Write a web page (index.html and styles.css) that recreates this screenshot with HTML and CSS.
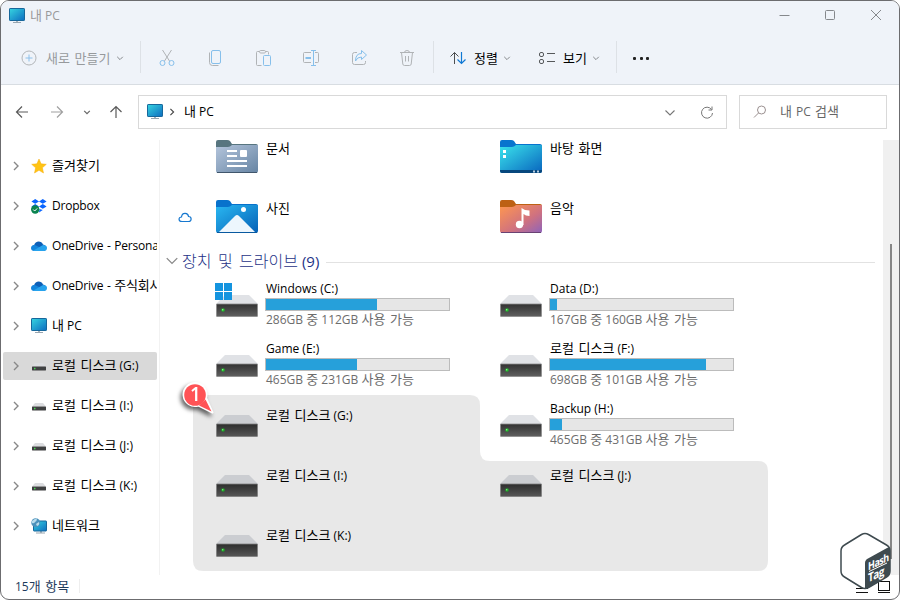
FILE: index.html
```html
<!DOCTYPE html>
<html lang="ko">
<head>
  <meta charset="UTF-8">
  <meta name="viewport" content="width=device-width, initial-scale=1.0">
  <title>내 PC</title>
  <link rel="stylesheet" href="styles.css">
</head>
<body>
  <!-- shared icons -->
  <svg class="defs" width="0" height="0">
    <defs>
      <linearGradient id="g-pc" x1="0" y1="0" x2="1" y2="1">
        <stop offset="0" stop-color="#36d5e0"/><stop offset="1" stop-color="#0d6cc0"/>
      </linearGradient>
      <linearGradient id="g-disk" x1="0" y1="0" x2="0" y2="1">
        <stop offset="0" stop-color="#323232"/><stop offset="1" stop-color="#606060"/>
      </linearGradient>
      <linearGradient id="g-doc" x1="0" y1="0" x2="1" y2="1">
        <stop offset="0" stop-color="#b4c5dc"/><stop offset="1" stop-color="#6684a3"/>
      </linearGradient>
      <linearGradient id="g-pic" x1="0" y1="0" x2="1" y2="1">
        <stop offset="0" stop-color="#2ab8f2"/><stop offset="1" stop-color="#0560b6"/>
      </linearGradient>
      <linearGradient id="g-desk" x1="0" y1="0" x2="1" y2="1">
        <stop offset="0" stop-color="#3be4ec"/><stop offset="1" stop-color="#0864be"/>
      </linearGradient>
      <linearGradient id="g-music" x1="0" y1="0" x2="1" y2="1">
        <stop offset="0" stop-color="#ff974f"/><stop offset=".6" stop-color="#cf7180"/><stop offset="1" stop-color="#8d63bb"/>
      </linearGradient>
    </defs>
    <symbol id="pc" viewBox="0 0 16 16">
      <path d="M7 12h2v3H7z" fill="#a9b4bd"/>
      <path d="M4 14h8v1H4z" fill="#98a5b0"/>
      <rect x=".5" y=".5" width="15" height="12" rx=".6" fill="url(#g-pc)" stroke="#17679b"/>
    </symbol>
    <symbol id="cloud" viewBox="0 0 16 12">
      <path d="M3 10C0 10 0 6 3 5.500C4 1 10 0 12 4.500C16 5 16.500 10 13 11H3z" fill="#0c5fb7"/>
      <path d="M0 8C0 5.500 2 5 4 5l8 4 1 2H3C1.300 11 0 9.800 0 8z" fill="#1285dc"/>
      <path d="M2 10.800L12 5c3 0 4 1.400 4 3 0 1.800-1.200 3-3 3H3z" fill="#27a3ed"/>
    </symbol>
    <symbol id="disk-small" viewBox="0 0 14 8">
      <path d="M3 0h8l3 3.500H0z" fill="#dcdde0"/>
      <rect y="3.500" width="14" height="4" rx=".4" fill="#404142"/>
      <rect x="2" y="4.800" width="1.500" height="1.500" fill="#49d451"/>
    </symbol>
    <symbol id="disk" viewBox="0 0 42 22">
      <path d="M9 0h24l9 9H0z" fill="#e0e2e6"/>
      <rect x=".5" y="9" width="41" height="12.500" rx=".5" fill="url(#g-disk)" stroke="#8b8b8b" stroke-width=".8"/>
      <circle cx="7" cy="15" r="1.800" fill="#20b72b"/>
      <circle cx="6.700" cy="14.700" r=".7" fill="#9dfa9b"/>
    </symbol>
    <symbol id="chev" viewBox="0 0 8 8">
      <path d="M1.200 2.800L4 5.600l2.800-2.800" fill="none" stroke="currentColor"/>
    </symbol>
    <symbol id="chev-wide" viewBox="0 0 12 12">
      <path d="M1.500 3.500L6 8l4.500-4.500" fill="none" stroke="currentColor" stroke-width="1.100"/>
    </symbol>
    <symbol id="right" viewBox="0 0 8 10">
      <path d="M2 1l4 4-4 4" fill="none" stroke="currentColor" stroke-width="1.400"/>
    </symbol>
  </svg>

  <div class="window">
    <header class="top">
      <div class="titlebar">
        <svg class="pc-icon"><use href="#pc"/></svg>
        <span class="title"><span class="ko">내</span> PC</span>
        <div class="win-buttons">
          <svg viewBox="0 0 12 12"><path d="M1.500 5.500h10"/></svg>
          <svg viewBox="0 0 12 12"><rect x="1.500" y=".5" width="9" height="9" rx="1"/></svg>
          <svg viewBox="0 0 12 12"><path d="M1 0l10 10M11 0L1 10"/></svg>
        </div>
      </div>
      <div class="toolbar">
        <div class="tool new">
          <svg class="plus" viewBox="0 0 16 16"><circle cx="8" cy="8" r="7" stroke="#b2b5b8"/><path d="M8 4.500v7M4.500 8h7" stroke="#8dc0ea"/></svg>
          <span class="ko">새로 만들기</span>
          <svg class="chev"><use href="#chev"/></svg>
        </div>
        <div class="icons">
          <svg viewBox="0 0 18 18"><path d="M4.500 1l7 11M13.500 1l-7 11" stroke="#b0b3b6"/><circle cx="4.500" cy="14" r="2.500" stroke="#86bfeb"/><circle cx="13.500" cy="14" r="2.500" stroke="#86bfeb"/></svg>
          <svg viewBox="0 0 18 18"><path d="M3.500 3.500v10q0 3 3 3h6" stroke="#b0b3b6"/><rect x="5.500" y="1.500" width="9" height="13" rx="1.500" stroke="#86bfeb"/></svg>
          <svg viewBox="0 0 18 18"><path d="M7.500 16.500h-4q-1 0-1-1v-12q0-1 1-1h2M11.500 2.500h2q1 0 1 1v2" stroke="#b0b3b6"/><rect x="5.500" y="1.500" width="6" height="2.500" rx="1.200" stroke="#b0b3b6"/><rect x="9.500" y="6.500" width="7" height="10" rx="1" stroke="#86bfeb"/></svg>
          <svg viewBox="0 0 18 18"><path d="M9 3.500H2.500q-1 0-1 1v8q0 1 1 1H9M13 3.500h2.500q1 0 1 1v8q0 1-1 1H13" stroke="#b0b3b6"/><path d="M11.500 1.500v15M9 1.500h5M9 16.500h5" stroke="#86bfeb"/><path d="M3.500 9H9" stroke="#86bfeb" stroke-width="2"/></svg>
          <svg viewBox="0 0 18 18"><path d="M7 3.500H4.500q-2 0-2 2v8q0 2 2 2h9q2 0 2-2V12" stroke="#b0b3b6"/><path d="M11.500 1.500L16.500 6l-5 4.500V8Q7 8 5.500 12 5.500 4.500 11.500 4.500z" stroke="#86bfeb"/></svg>
          <svg viewBox="0 0 18 18"><path d="M2 3.500h14M6.500 3.500q0-2 2.500-2t2.500 2M3.500 3.500l1.300 11.500q.2 1.500 1.700 1.500h5q1.500 0 1.700-1.500L14.500 3.500M7.500 7v5.500M10.500 7v5.500" stroke="#b0b3b6"/></svg>
        </div>
        <div class="tool sort">
          <svg class="sort-icon" viewBox="0 0 18 14"><path d="M5.500 13V1.500M1.500 5.500l4-4 4 4" stroke="#4c4e50"/><path d="M12.500 1v11.500M8.500 8.500l4 4 4-4" stroke="#0f78d4" stroke-width="1.200"/></svg>
          <span class="ko">정렬</span>
          <svg class="chev"><use href="#chev"/></svg>
        </div>
        <div class="tool view">
          <svg class="view-icon" viewBox="0 0 18 14"><g stroke="#55585a"><rect x="1.500" y="1.500" width="4" height="4" rx="1.500"/><rect x="1.500" y="8.500" width="4" height="4" rx="1.500"/><path d="M9 2.500h8M9 10.500h8"/></g></svg>
          <span class="ko">보기</span>
          <svg class="chev"><use href="#chev"/></svg>
        </div>
        <div class="more"><i></i><i></i><i></i></div>
      </div>
    </header>

    <nav class="address-row">
      <div class="arrows">
        <svg viewBox="0 0 14 14"><path d="M13 7H1.500M7 1.500L1.500 7 7 12.500"/></svg>
        <svg class="light" viewBox="0 0 14 14"><path d="M1 7h11.500M7 1.500L12.500 7 7 12.500"/></svg>
        <svg class="recent"><use href="#chev"/></svg>
        <svg viewBox="0 0 14 14"><path d="M7 13V1.500M1.500 7L7 1.500 12.500 7"/></svg>
      </div>
      <div class="address">
        <svg class="pc-icon"><use href="#pc"/></svg>
        <svg class="crumb"><use href="#right"/></svg>
        <span><span class="ko">내</span> PC</span>
        <svg class="drop"><use href="#chev-wide"/></svg>
        <svg class="refresh" viewBox="0 0 14 14"><path d="M11.500 3.500a5.500 5.500 0 1 0 1 3.500M12 .5v3.500H8.500"/></svg>
      </div>
      <div class="search">
        <svg viewBox="0 0 14 14"><circle cx="8.500" cy="5" r="4"/><path d="M5.500 8L1 12.500"/></svg>
        <span><span class="ko">내</span> PC <span class="ko">검색</span></span>
      </div>
    </nav>

    <div class="body">
      <aside class="sidebar">
        <div class="nav-item">
          <svg class="arrow"><use href="#right"/></svg>
          <svg class="nav-icon" viewBox="0 0 16 16"><path d="M8 1l2.100 4.800 5.200.5-3.900 3.500 1.100 5.200L8 12.300 3.500 15l1.100-5.200L.7 6.300l5.200-.5z" fill="#ffc414" stroke="#f6ac12" stroke-width=".5"/></svg>
          <span><span class="ko">즐겨찾기</span></span>
        </div>
        <div class="nav-item">
          <svg class="arrow"><use href="#right"/></svg>
          <svg class="nav-icon" viewBox="0 0 16 16"><path d="M4.200 1L8 3.400 4.200 5.800.4 3.400zM11.800 1l3.800 2.400-3.800 2.400L8 3.400zM4.200 6L8 8.400l-3.800 2.400L.4 8.400zM11.800 6l3.800 2.400-3.800 2.400L8 8.400zM8.500 11l3.300 1L8 14.500z" fill="#0a65ff"/><circle cx="4.200" cy="11.500" r="4.200" fill="#0b8450"/><path d="M2.200 11.500l1.500 1.500 2.500-2.600" fill="none" stroke="#fff"/></svg>
          <span class="tight">Dropbox</span>
        </div>
        <div class="nav-item">
          <svg class="arrow"><use href="#right"/></svg>
          <svg class="nav-icon"><use href="#cloud"/></svg>
          <span class="tight">OneDrive - Persona</span>
        </div>
        <div class="nav-item">
          <svg class="arrow"><use href="#right"/></svg>
          <svg class="nav-icon"><use href="#cloud"/></svg>
          <span class="tight">OneDrive - <span class="ko">주식회사</span></span>
        </div>
        <div class="nav-item">
          <svg class="arrow"><use href="#right"/></svg>
          <svg class="nav-icon"><use href="#pc"/></svg>
          <span><span class="ko">내</span> PC</span>
        </div>
        <div class="nav-item active">
          <svg class="arrow"><use href="#right"/></svg>
          <svg class="nav-icon disk-small"><use href="#disk-small"/></svg>
          <span><span class="ko">로컬 디스크</span> (G:)</span>
        </div>
        <div class="nav-item">
          <svg class="arrow"><use href="#right"/></svg>
          <svg class="nav-icon disk-small"><use href="#disk-small"/></svg>
          <span><span class="ko">로컬 디스크</span> (I:)</span>
        </div>
        <div class="nav-item">
          <svg class="arrow"><use href="#right"/></svg>
          <svg class="nav-icon disk-small"><use href="#disk-small"/></svg>
          <span><span class="ko">로컬 디스크</span> (J:)</span>
        </div>
        <div class="nav-item">
          <svg class="arrow"><use href="#right"/></svg>
          <svg class="nav-icon disk-small"><use href="#disk-small"/></svg>
          <span><span class="ko">로컬 디스크</span> (K:)</span>
        </div>
        <div class="nav-item">
          <svg class="arrow"><use href="#right"/></svg>
          <svg class="nav-icon" viewBox="0 0 16 16"><path d="M9 12h2v3H9z" fill="#a9b4bd"/><path d="M5 14.500h9v1H5z" fill="#98a5b0"/><rect x="2.500" y="3" width="13" height="10" rx=".5" fill="url(#g-pc)" stroke="#17679b"/><circle cx="4.700" cy="4.700" r="4.400" fill="#4b91bb"/><path d="M1 3q3-3 5-2.500Q6 3 4 4 3 6 1 5zM5 6l3-2q1 3-2 4z" fill="#b9dcec"/></svg>
          <span><span class="ko">네트워크</span></span>
        </div>
      </aside>

      <main class="content">
        <section class="grid folders">
          <div class="item">
            <svg class="folder" viewBox="0 0 42 33"><path d="M0 8V2q0-2 2-2h9q2 0 3 1l2 3h24q2 0 2 2v3z" fill="#57757f"/><path d="M0 7h12q2 0 4-2h26v26q0 2-2 2H2q-2 0-2-2z" fill="url(#g-doc)"/><path d="M1 32.500h40" stroke="#40566c"/><path d="M11 11h10M11 16h10M11 21h20M11 26h20" stroke="#fff" stroke-width="2"/><rect x="24" y="10" width="7" height="7" rx="1" fill="#fff"/></svg>
            <div class="info"><span class="name ko">문서</span></div>
          </div>
          <div class="item">
            <svg class="folder" viewBox="0 0 42 33"><path d="M0 8V2q0-2 2-2h9q2 0 3 1l2 3h24q2 0 2 2v3z" fill="#0874ce"/><path d="M0 7h12q2 0 4-2h26v26q0 2-2 2H2q-2 0-2-2z" fill="url(#g-desk)"/><path d="M0 30h42v1q0 2-2 2H2q-2 0-2-2z" fill="#07477d"/><path d="M3 10h3v3H3zM3 15h3v3H3z" fill="#fff"/><path d="M33 30.500h2v2h-2zM37 30.500h2v2h-2z" fill="#b9cfe2"/></svg>
            <div class="info"><span class="name ko">바탕 화면</span></div>
          </div>
          <div class="item">
            <svg class="sync" viewBox="0 0 14 11"><path d="M4 9.500C0 9.500.3 5 3.500 5 4 .2 10 .2 10.500 4.500c3.500 0 3.500 5 0 5z"/></svg>
            <svg class="folder" viewBox="0 0 42 33"><path d="M0 8V2q0-2 2-2h9q2 0 3 1l2 3h24q2 0 2 2v3z" fill="#0872cc"/><path d="M0 7h12q2 0 4-2h26v26q0 2-2 2H2q-2 0-2-2z" fill="url(#g-pic)"/><path d="M3 32l16-16q2-2 4 0l16 16z" fill="#edf6fd"/><path d="M1 32.500h40" stroke="#0859a0"/><circle cx="27.500" cy="9.500" r="2.500" fill="#fff"/></svg>
            <div class="info"><span class="name ko">사진</span></div>
          </div>
          <div class="item">
            <svg class="folder" viewBox="0 0 42 33"><path d="M0 8V2q0-2 2-2h9q2 0 3 1l2 3h24q2 0 2 2v3z" fill="#bd6114"/><path d="M0 7h12q2 0 4-2h26v26q0 2-2 2H2q-2 0-2-2z" fill="url(#g-music)"/><path d="M1 32.500h40" stroke="#694273"/><circle cx="19.500" cy="24.500" r="3.700" fill="#fff"/><path d="M21.500 8q3 2.500 8 2.500v5.500q-4 0-6-2v11h-2z" fill="#fff"/></svg>
            <div class="info"><span class="name ko">음악</span></div>
          </div>
        </section>

        <h2 class="group">
          <svg><use href="#chev-wide"/></svg>
          <span><span class="ko">장치 및 드라이브</span> (9)</span>
        </h2>

        <section class="grid drives">
          <div class="item">
            <svg class="disk"><use href="#disk"/></svg>
            <svg class="win-logo" viewBox="0 0 17 17"><path d="M0 0h8v8H0zM9 0h8v8H9zM0 9h8v8H0zM9 9h8v8H9z" fill="#1494df"/></svg>
            <div class="info">
              <span class="name">Windows (C:)</span>
              <div class="bar"><div class="fill" style="width: 60.7%"></div></div>
              <span class="free">286GB <span class="ko">중</span> 112GB <span class="ko">사용 가능</span></span>
            </div>
          </div>
          <div class="item">
            <svg class="disk"><use href="#disk"/></svg>
            <div class="info">
              <span class="name">Data (D:)</span>
              <div class="bar"><div class="fill" style="width: 4%"></div></div>
              <span class="free">167GB <span class="ko">중</span> 160GB <span class="ko">사용 가능</span></span>
            </div>
          </div>
          <div class="item">
            <svg class="disk"><use href="#disk"/></svg>
            <div class="info">
              <span class="name">Game (E:)</span>
              <div class="bar"><div class="fill" style="width: 49.7%"></div></div>
              <span class="free">465GB <span class="ko">중</span> 231GB <span class="ko">사용 가능</span></span>
            </div>
          </div>
          <div class="item">
            <svg class="disk"><use href="#disk"/></svg>
            <div class="info">
              <span class="name"><span class="ko">로컬 디스크</span> (F:)</span>
              <div class="bar"><div class="fill" style="width: 85.5%"></div></div>
              <span class="free">698GB <span class="ko">중</span> 101GB <span class="ko">사용 가능</span></span>
            </div>
          </div>
          <div class="item locked">
            <svg class="disk"><use href="#disk"/></svg>
            <div class="info"><span class="name"><span class="ko">로컬 디스크</span> (G:)</span></div>
          </div>
          <div class="item">
            <svg class="disk"><use href="#disk"/></svg>
            <div class="info">
              <span class="name">Backup (H:)</span>
              <div class="bar"><div class="fill" style="width: 6.8%"></div></div>
              <span class="free">465GB <span class="ko">중</span> 431GB <span class="ko">사용 가능</span></span>
            </div>
          </div>
          <div class="item locked">
            <svg class="disk"><use href="#disk"/></svg>
            <div class="info"><span class="name"><span class="ko">로컬 디스크</span> (I:)</span></div>
          </div>
          <div class="item locked">
            <svg class="disk"><use href="#disk"/></svg>
            <div class="info"><span class="name"><span class="ko">로컬 디스크</span> (J:)</span></div>
          </div>
          <div class="item locked">
            <svg class="disk"><use href="#disk"/></svg>
            <div class="info"><span class="name"><span class="ko">로컬 디스크</span> (K:)</span></div>
          </div>
        </section>

        <!-- highlight over the drives without a usage bar -->
        <svg class="highlight" viewBox="0 0 575 176"><path d="M10 0h267q10 0 10 10v46q0 10 10 10h268q10 0 10 10v90q0 10-10 10H10q-10 0-10-10V10Q0 0 10 0z"/></svg>
        <div class="marker">
          <svg viewBox="0 0 36 36"><path d="M18.500 24.500A11.500 11.500 0 1 1 26 17l6.500 14.500z" fill="#fff" stroke="#fff" stroke-width="2" stroke-linejoin="round"/><circle cx="15" cy="14" r="10.800" fill="#ff5356"/><path d="M19 24.500l6.500-6 6 12z" fill="#ff5356"/></svg>
          <span>1</span>
        </div>
      </main>

      <div class="scrollbar"><div class="thumb"></div></div>
    </div>

    <footer class="status">
      <span class="count">15<span class="ko">개 항목</span></span>
      <div class="view-switch">
        <svg viewBox="0 0 12 12"><path d="M0 3.500h12M0 7.500h12M0 11.500h12"/></svg>
        <svg viewBox="0 0 12 12"><rect x=".5" y=".5" width="11" height="9"/><path d="M0 11.500h12"/></svg>
      </div>
    </footer>

    <div class="hashtag">
      <svg viewBox="0 0 52 60"><path d="M21.500 3.500q3.500-2 7 0l18 10.500q3.500 2 3.500 6v20q0 4-3.500 6l-18 10.500q-3.500 2-7 0L4.500 46Q1 44 1 40V20q0-4 3.500-6z" fill="#fff" stroke="#3e4a4f" stroke-width="1.500"/><path d="M25 57V32q0-3 3-4.500L47 17q3-1.500 3 2v21q0 4-3.500 6L28 57q-3 1.500-3 0z" fill="#3e4a4f"/><path d="M29 40.500l18-8.500" stroke="#fff"/></svg>
      <span class="hash">Hash</span>
      <span class="tag">Tag</span>
    </div>
  </div>
</body>
</html>
```
FILE: styles.css
```css
* {
  box-sizing: border-box;
}
body {
  margin: 0;
  font-family: 'Open Sans', 'Noto Sans CJK KR', sans-serif;
  font-size: 12px;
  line-height: 16px;
  color: #000;
  background: #fff;
}
svg {
  display: block;
  flex: none;
  fill: none;
}
.defs {
  position: absolute;
}
.ko {
  font-family: 'Noto Sans CJK KR', sans-serif;
  font-size: 13px;
  font-weight: 400;
  line-height: 14px;
  word-spacing: 1px;
}
.window {
  position: relative;
  display: flex;
  flex-direction: column;
  width: 900px;
  height: 600px;
  border: 1px solid #6c6c6f;
  border-radius: 9px;
  overflow: hidden;
}

/* title bar and toolbar */
.top {
  height: 84px;
  background: #eff3f9;
  border-bottom: 1px solid #d8dde2;
}
.titlebar {
  display: flex;
  align-items: center;
  height: 29px;
  padding: 0 17px 0 8px;
  color: #999;
}
.pc-icon {
  width: 16px;
  height: 16px;
}
.title {
  margin-left: 5px;
}
.win-buttons {
  display: flex;
  gap: 34px;
  margin-left: auto;
}
.win-buttons svg {
  width: 12px;
  height: 12px;
  stroke: #85888c;
}
.toolbar {
  display: flex;
  align-items: center;
  height: 54px;
}
.tool {
  display: flex;
  align-items: center;
  height: 32px;
  padding-top: 1px;
  border-right: 1px solid #dde1e6;
}
.chev {
  width: 8px;
  height: 8px;
  color: #85888c;
}
.new {
  width: 140px;
  padding-left: 20px;
  color: #96999c;
}
.plus {
  width: 16px;
  height: 16px;
  margin-right: 9px;
}
.new .chev {
  margin-left: 6px;
}
.icons {
  display: flex;
  gap: 30px;
  width: 293px;
  height: 32px;
  padding: 1px 0 0 17px;
  align-items: center;
  border-right: 1px solid #dde1e6;
}
.icons svg {
  width: 18px;
  height: 18px;
}
.sort {
  width: 88px;
  padding-left: 15px;
  border: 0;
}
.sort-icon,
.view-icon {
  width: 18px;
  height: 14px;
  margin-right: 7px;
}
.tool.sort .chev,
.tool.view .chev {
  margin-left: 5px;
}
.view {
  width: 95px;
  padding-left: 16px;
}
.more {
  display: flex;
  gap: 3.5px;
  margin: 3px 0 0 16px;
}
.more i {
  width: 3px;
  height: 3px;
  border-radius: 1px;
  background: #222;
}

/* address bar */
.address-row {
  display: flex;
  align-items: center;
  height: 55px;
  padding-bottom: 1px;
}
.arrows {
  display: flex;
  align-items: center;
  width: 137px;
  padding-left: 14px;
}
.arrows svg {
  width: 14px;
  height: 14px;
  margin-right: 21px;
  stroke: #5a5a5a;
  stroke-width: 1.2;
}
.arrows .light {
  stroke: #a0a0a0;
}
.arrows .recent {
  width: 8px;
  height: 8px;
  margin: 0 18px 0 -2px;
  color: #666;
  stroke: none;
}
.address,
.search {
  display: flex;
  align-items: center;
  height: 34px;
  border: 1px solid #d9d9d9;
}
.address {
  width: 589px;
  padding: 0 12px 0 8px;
}
.crumb {
  width: 8px;
  height: 8px;
  margin: 0 8px 0 5px;
  color: #444;
}
.drop {
  width: 12px;
  height: 12px;
  margin: 2px 24px 0 auto;
  color: #777;
}
.refresh {
  width: 14px;
  height: 14px;
  margin-top: 2px;
  stroke: #777;
}
.search {
  width: 148px;
  margin-left: 12px;
  padding-left: 13px;
  color: #666;
  word-spacing: 1px;
}
.search svg {
  width: 14px;
  height: 14px;
  margin-right: 13px;
  stroke: #9a8f8f;
}

/* sidebar */
.body {
  display: flex;
  height: 435px;
}
.sidebar {
  width: 159px;
  padding: 12px 2px 0 2px;
  border-right: 1px solid #f2f2f2;
}
.nav-item {
  display: flex;
  align-items: center;
  height: 28px;
  margin-bottom: 12px;
  padding: 0 0 1px 9px;
  white-space: nowrap;
  overflow: hidden;
}
.nav-item.active {
  background: #d9d9d9;
  border-radius: 2px;
}
.tight {
  letter-spacing: -0.2px;
  word-spacing: 0.8px;
}
.arrow {
  width: 8px;
  height: 10px;
  margin: 1px 11px 0 0;
  color: #888;
}
.nav-icon {
  width: 16px;
  height: 16px;
  margin: 1px 5px 0 0;
}
.disk-small {
  width: 14px;
  height: 8px;
  margin: 3px 6px 0 1px;
}

/* folders and drives */
.content {
  position: relative;
  width: 723px;
}
.grid {
  display: grid;
  grid-template-columns: 284px 284px;
  grid-auto-rows: 60px;
  padding-left: 56px;
}
.item {
  position: relative;
  display: flex;
}
.folder {
  width: 42px;
  height: 33px;
}
.disk {
  width: 42px;
  height: 22px;
  margin-top: 15px;
}
.sync {
  position: absolute;
  left: -38px;
  top: 12px;
  width: 14px;
  height: 11px;
  stroke: #1778cf;
  stroke-width: 1.2;
}
.win-logo {
  position: absolute;
  left: -1px;
  top: 3px;
  width: 17px;
  height: 17px;
}
.info {
  display: flex;
  flex-direction: column;
  margin-left: 7px;
}
.name {
  height: 18px;
  padding-left: 1px;
  line-height: 17px;
}
.folders .name {
  line-height: 16px;
}
.locked .name {
  margin-top: 7px;
}
.bar {
  width: 185px;
  height: 13px;
  border: 1px solid #bcbcbc;
  background: #e6e6e6;
}
.fill {
  height: 100%;
  background: #26a0da;
}
.free {
  padding: 1px 0 0 1px;
  color: #6d6d6d;
}
.group {
  display: flex;
  align-items: center;
  height: 20px;
  margin: -9px 0 9px;
  padding-left: 6px;
  font-size: 15px;
  font-weight: 400;
  color: #1e3287;
}
.group .ko {
  font-size: 16px;
  font-weight: 300;
  word-spacing: 2px;
}
.group svg {
  width: 14px;
  height: 14px;
  margin: 0 3px 0 -1px;
  color: #888;
}
.group::after {
  content: '';
  flex: 1;
  height: 1px;
  margin: 2px 8px 0 7px;
  background: #e2e2e2;
}
.highlight {
  position: absolute;
  left: 33px;
  top: 255px;
  width: 575px;
  height: 176px;
  fill: rgba(0, 0, 0, 0.09);
}
.marker {
  position: absolute;
  left: 20px;
  top: 241px;
  width: 36px;
  height: 36px;
  filter: drop-shadow(-2px 3px 2px rgba(0, 0, 0, 0.6));
}
.marker span {
  position: absolute;
  left: 10px;
  top: 5px;
  color: #fff;
  font-size: 19px;
  font-weight: 600;
}
.scrollbar {
  width: 16px;
  padding: 104px 0 0 7px;
  background: #f0f0f0;
}
.thumb {
  width: 2px;
  height: 315px;
  background: #868686;
}

/* status bar */
.status {
  display: flex;
  justify-content: space-between;
  height: 24px;
  padding: 4px 9px 0 14px;
  color: #1d3b5c;
}
.count {
  width: 65px;
  height: 14px;
  line-height: 16px;
  border-right: 1px solid #eee;
}
.view-switch {
  display: flex;
  gap: 10px;
  padding-top: 2px;
}
.view-switch svg {
  width: 12px;
  height: 12px;
  stroke: #111;
}
.hashtag {
  position: absolute;
  left: 839px;
  top: 530px;
  width: 52px;
  height: 60px;
}
.hashtag span {
  position: absolute;
  color: #fff;
  font-size: 9px;
  font-weight: 700;
  line-height: 10px;
  letter-spacing: -0.5px;
  transform: skewY(-25deg) scaleY(1.2);
}
.hash {
  left: 28px;
  top: 26px;
}
.hashtag .tag {
  left: 28px;
  top: 38px;
  font-size: 10px;
}
```
